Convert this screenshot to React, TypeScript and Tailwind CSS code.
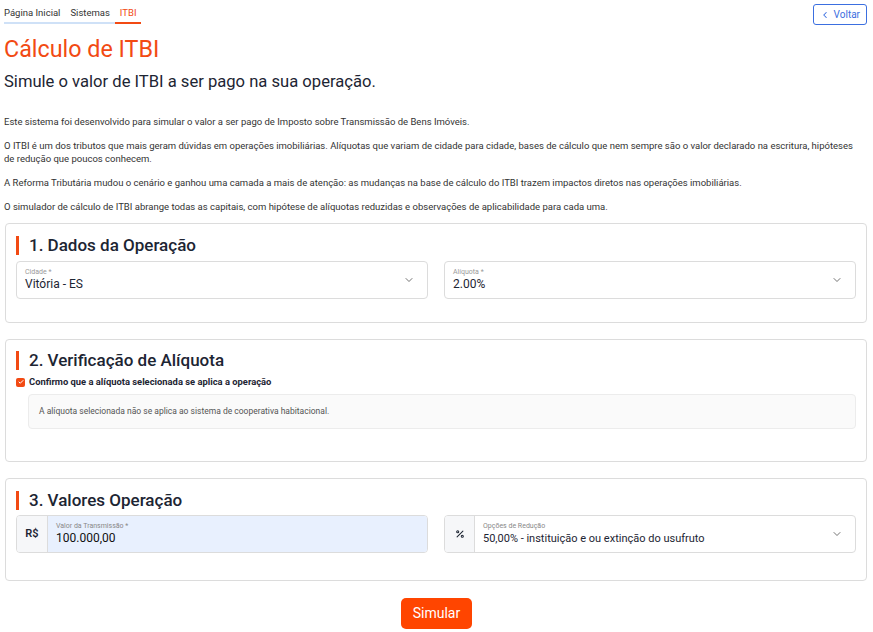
import { ChevronDown, ChevronLeft, Check, Percent } from "lucide-react"

const font = { fontFamily: "Roboto, 'Noto Sans', sans-serif" }

function SectionTitle({ children }: { children: string }) {
  return (
    <div className="flex items-center gap-[10px] h-[20px]">
      <span className="w-[3px] h-[19px] bg-[#f24a13]" />
      <h2 className="text-[17px] font-medium text-[#1d2533] leading-none">{children}</h2>
    </div>
  )
}

function SelectBox({ label, value }: { label: string; value: string }) {
  return (
    <div className="flex-1 h-[38px] border border-[#dcdcdc] rounded-[4px] flex items-center pl-[8px] pr-[12px] bg-white">
      <div className="flex-1 flex flex-col">
        <span className="text-[7px] text-[#9a9a9a] leading-[9px]">{label}</span>
        <span className="text-[12px] text-[#1d2533] leading-[15px]">{value}</span>
      </div>
      <ChevronDown size={12} strokeWidth={1.5} className="text-[#444]" />
    </div>
  )
}

export default function App() {
  return (
    <div style={font} className="w-[873px] h-[632px] bg-white px-[4px] pt-[4px] text-[#1d2533] overflow-hidden">
      {/* breadcrumb */}
      <div className="flex justify-between items-start">
        <div className="flex text-[9.5px] leading-none mt-[4px]">
          <span className="pr-[5px] pb-[4px] border-b-2 border-[#cfe1f7] text-[#333]">Página Inicial</span>
          <span className="px-[5px] pb-[4px] border-b-2 border-[#cfe1f7] text-[#333]">Sistemas</span>
          <span className="px-[5px] pb-[4px] border-b-2 border-[#f24a13] text-[#f24a13]">ITBI</span>
        </div>
        <button className="mr-[2px] h-[21px] px-[6px] flex items-center gap-[4px] border border-[#3b6fe0] rounded-[3px] text-[#3b6fe0] text-[10px]">
          <ChevronLeft size={10} strokeWidth={2.5} />
          Voltar
        </button>
      </div>

      <h1 className="mt-[11px] text-[23.3px] leading-[27px] text-[#f24a13]">Cálculo de ITBI</h1>
      <p className="mt-[8px] text-[16.6px] leading-[22px] text-[#1d2533]">Simule o valor de ITBI a ser pago na sua operação.</p>

      <div className="mt-[22px] text-[9.5px] leading-[13px] text-[#333] flex flex-col gap-[11px] pr-[10px]">
        <p>Este sistema foi desenvolvido para simular o valor a ser pago de Imposto sobre Transmissão de Bens Imóveis.</p>
        <p>
          O ITBI é um dos tributos que mais geram dúvidas em operações imobiliárias. Alíquotas que variam de cidade para cidade, bases de cálculo que nem sempre são o valor declarado na escritura, hipóteses de redução que poucos conhecem.
        </p>
        <p>A Reforma Tributária mudou o cenário e ganhou uma camada a mais de atenção: as mudanças na base de cálculo do ITBI trazem impactos diretos nas operações imobiliárias.</p>
        <p>O simulador de cálculo de ITBI abrange todas as capitais, com hipótese de alíquotas reduzidas e observações de aplicabilidade para cada uma.</p>
      </div>

      <div className="mt-[10px] flex flex-col gap-[16px] pl-[1px] pr-[2px]">
        {/* 1 */}
        <section className="border border-[#dcdcdc] rounded-[4px] px-[10px] pt-[11px] pb-[23px]">
          <SectionTitle>1. Dados da Operação</SectionTitle>
          <div className="mt-[6px] flex gap-[16px]">
            <SelectBox label="Cidade *" value="Vitória - ES" />
            <SelectBox label="Alíquota *" value="2.00%" />
          </div>
        </section>

        {/* 2 */}
        <section className="border border-[#dcdcdc] rounded-[4px] px-[10px] pt-[10px] pb-[32px]">
          <SectionTitle>2. Verificação de Alíquota</SectionTitle>
          <label className="mt-[5px] flex items-center gap-[4px]">
            <span className="w-[9px] h-[9px] rounded-[2px] bg-[#f24a13] flex items-center justify-center">
              <Check size={6} strokeWidth={4} className="text-white" />
            </span>
            <span className="text-[9.4px] font-bold text-[#1d2533]">Confirmo que a alíquota selecionada se aplica a operação</span>
          </label>
          <div className="mt-[5px] ml-[12px] h-[35px] border border-[#ececec] rounded-[4px] bg-[#fafafa] flex items-center px-[10px] text-[8.5px] text-[#555]">
            A alíquota selecionada não se aplica ao sistema de cooperativa habitacional.
          </div>
        </section>

        {/* 3 */}
        <section className="border border-[#dcdcdc] rounded-[4px] px-[10px] pt-[11px] pb-[27px]">
          <SectionTitle>3. Valores Operação</SectionTitle>
          <div className="mt-[5px] flex gap-[16px]">
            <div className="flex-1 h-[38px] border border-[#dcdcdc] rounded-[4px] flex overflow-hidden">
              <div className="w-[31px] bg-[#f6f7f9] border-r border-[#dcdcdc] flex items-center justify-center text-[11px] font-semibold text-[#1d2533]">R$</div>
              <div className="flex-1 bg-[#e8f0fe] flex flex-col justify-center pl-[8px]">
                <span className="text-[7px] text-[#888] leading-[9px]">Valor da Transmissão *</span>
                <span className="text-[12px] text-[#111] leading-[15px]">100.000,00</span>
              </div>
            </div>
            <div className="flex-1 h-[38px] border border-[#dcdcdc] rounded-[4px] flex overflow-hidden">
              <div className="w-[30px] bg-[#f6f7f9] border-r border-[#dcdcdc] flex items-center justify-center">
                <Percent size={10} strokeWidth={2.5} className="text-[#1d2533]" />
              </div>
              <div className="flex-1 flex items-center pl-[8px] pr-[12px]">
                <div className="flex-1 flex flex-col">
                  <span className="text-[7px] text-[#888] leading-[9px]">Opções de Redução</span>
                  <span className="text-[11px] text-[#1d2533] leading-[15px]">50,00% - instituição e ou extinção do usufruto</span>
                </div>
                <ChevronDown size={12} strokeWidth={1.5} className="text-[#444]" />
              </div>
            </div>
          </div>
        </section>
      </div>

      <div className="mt-[17px] flex justify-center">
        <button className="h-[31px] px-[12px] rounded-[5px] bg-[#ff4500] text-white text-[14px]">Simular</button>
      </div>
    </div>
  )
}
